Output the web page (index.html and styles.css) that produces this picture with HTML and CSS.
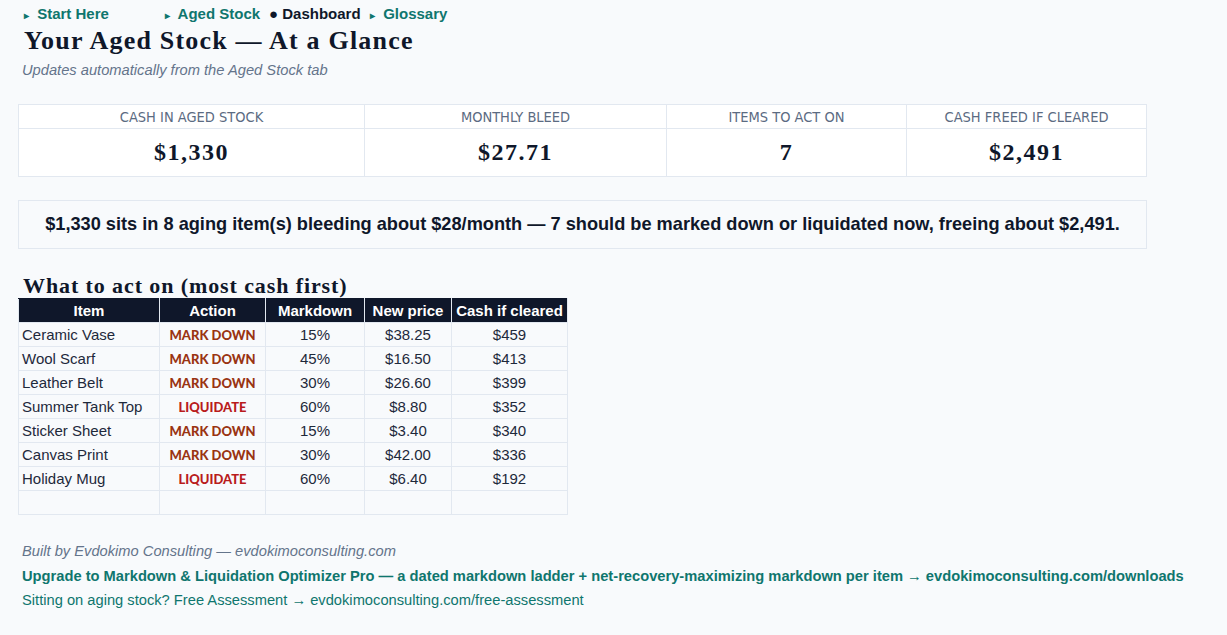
FILE: index.html
```html
<!DOCTYPE html>
<html lang="en">
<head>
    <meta charset="UTF-8">
    <meta name="viewport" content="width=device-width, initial-scale=1.0">
    <title>Dashboard</title>
    <link rel="stylesheet" href="styles.css">
</head>
<body>
    <div class="sheet">
        <!-- tab links -->
        <div class="nav">
            <span class="nav-link">&#9656; Start Here</span>
            <span class="nav-link">&#9656; Aged Stock</span>
            <span class="nav-current">&#9679; Dashboard</span>
            <span class="nav-link">&#9656; Glossary</span>
        </div>

        <h1>Your Aged Stock — At a Glance</h1>
        <p class="subtitle">Updates automatically from the Aged Stock tab</p>

        <table class="kpis">
            <tr>
                <th class="kpi-a">Cash in aged stock</th>
                <th class="kpi-b">Monthly bleed</th>
                <th class="kpi-c">Items to act on</th>
                <th class="kpi-d">Cash freed if cleared</th>
            </tr>
            <tr>
                <td>$1,330</td>
                <td>$27.71</td>
                <td>7</td>
                <td>$2,491</td>
            </tr>
        </table>

        <div class="summary">
            $1,330 sits in 8 aging item(s) bleeding about $28/month — 7 should be marked down or liquidated now, freeing about $2,491.
        </div>

        <h2>What to act on (most cash first)</h2>
        <table class="actions">
            <tr>
                <th class="col-item">Item</th>
                <th class="col-action">Action</th>
                <th class="col-md">Markdown</th>
                <th class="col-price">New price</th>
                <th class="col-cash">Cash if cleared</th>
            </tr>
            <tr><td>Ceramic Vase</td><td class="mark">MARK DOWN</td><td>15%</td><td>$38.25</td><td>$459</td></tr>
            <tr><td>Wool Scarf</td><td class="mark">MARK DOWN</td><td>45%</td><td>$16.50</td><td>$413</td></tr>
            <tr><td>Leather Belt</td><td class="mark">MARK DOWN</td><td>30%</td><td>$26.60</td><td>$399</td></tr>
            <tr><td>Summer Tank Top</td><td class="liq">LIQUIDATE</td><td>60%</td><td>$8.80</td><td>$352</td></tr>
            <tr><td>Sticker Sheet</td><td class="mark">MARK DOWN</td><td>15%</td><td>$3.40</td><td>$340</td></tr>
            <tr><td>Canvas Print</td><td class="mark">MARK DOWN</td><td>30%</td><td>$42.00</td><td>$336</td></tr>
            <tr><td>Holiday Mug</td><td class="liq">LIQUIDATE</td><td>60%</td><td>$6.40</td><td>$192</td></tr>
            <tr><td></td><td></td><td></td><td></td><td></td></tr>
        </table>

        <div class="footer">
            <p class="credit">Built by Evdokimo Consulting — evdokimoconsulting.com</p>
            <p class="upgrade">Upgrade to Markdown &amp; Liquidation Optimizer Pro — a dated markdown ladder + net-recovery-maximizing markdown per item → evdokimoconsulting.com/downloads</p>
            <p class="assess">Sitting on aging stock? Free Assessment → evdokimoconsulting.com/free-assessment</p>
        </div>
    </div>
</body>
</html>
```

FILE: styles.css
```css
body {
    margin: 0;
    padding: 0;
    background-color: #f8fafc;
    font-family: "Liberation Sans", Arial, sans-serif;
    color: #0f172a;
}

.sheet {
    padding: 5px 0 0 18px;
}

.nav {
    display: grid;
    grid-template-columns: 141px 106px 99px 87px;
    height: 18px;
    font-size: 15px;
    font-weight: bold;
    line-height: 18px;
}

.nav span {
    padding-left: 6px;
    white-space: nowrap;
}

.nav-link {
    color: #0f766e;
}

.nav-link::first-letter {
    font-size: 10px;
    margin-right: 4px;
}

.nav .nav-current {
    padding-left: 4px;
    color: #0f172a;
}

h1 {
    margin: 3px 0 0 6px;
    font-family: "Liberation Serif", Georgia, serif;
    font-size: 26px;
    letter-spacing: 1.2px;
    line-height: 30px;
}

.subtitle {
    margin: 5px 0 0 4px;
    font-size: 14.7px;
    font-style: italic;
    color: #64748b;
    line-height: 18px;
}

.kpis {
    margin-top: 25px;
    border-collapse: collapse;
    background: #fff;
}

.kpis th,
.kpis td {
    border: 1px solid #e2e8f0;
    text-align: center;
    padding: 0;
}

.kpis th {
    height: 23px;
    font-family: "Liberation Sans Narrow", "DejaVu Sans Condensed", sans-serif;
    font-size: 14.5px;
    font-weight: normal;
    text-transform: uppercase;
    color: #5b6b82;
}

.kpis td {
    height: 47px;
    font-family: "Liberation Serif", Georgia, serif;
    font-size: 24px;
    letter-spacing: 1.5px;
    font-weight: bold;
}

.kpi-a { width: 345px; }
.kpi-b { width: 301px; }
.kpi-c { width: 239px; }
.kpi-d { width: 239px; }

.summary {
    box-sizing: border-box;
    width: 1129px;
    height: 49px;
    margin-top: 23px;
    border: 1px solid #e2e8f0;
    font-size: 18.2px;
    font-weight: bold;
    line-height: 47px;
    text-align: center;
}

h2 {
    margin: 25px 0 0 5px;
    font-family: "Liberation Serif", Georgia, serif;
    font-size: 22px;
    letter-spacing: 0.9px;
    line-height: 24px;
}

.actions {
    border-collapse: collapse;
    font-size: 15px;
}

.actions th,
.actions td {
    height: 23px;
    padding: 0;
    border: 1px solid #e2e8f0;
    text-align: center;
    color: #1e293b;
}

.actions th {
    background: #0f172a;
    color: #fff;
    border-color: #e2e8f0;
    border-top-color: #0f172a;
}

.actions td:first-child {
    text-align: left;
    padding-left: 3px;
}

.col-item { width: 140px; }
.col-action { width: 105px; }
.col-md { width: 98px; }
.col-price { width: 86px; }
.col-cash { width: 115px; }

.actions .mark,
.actions .liq {
    font-family: "Lato", "Open Sans", sans-serif;
    font-size: 13px;
    font-weight: 900;
}

.actions .mark { color: #9a3412; }
.actions .liq { color: #b91c1c; }

.footer {
    margin-top: 24px;
    font-size: 14.7px;
    line-height: 24.5px;
}

.footer p {
    margin: 0 0 0 4px;
    color: #0f766e;
}

.footer .credit {
    font-style: italic;
    color: #64748b;
}

.footer .upgrade {
    font-weight: bold;
}
```
